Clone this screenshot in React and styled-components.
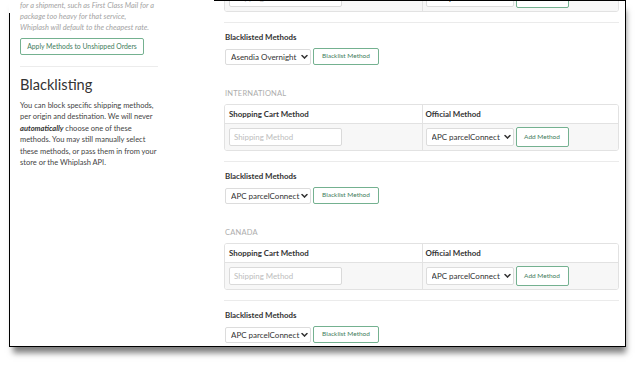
import React from 'react';
import styled, { createGlobalStyle } from 'styled-components';

const Global = createGlobalStyle`
  html, body { margin: 0; padding: 0; background: #fff; }
  body {
    width: 635px; height: 366px; overflow: hidden;
    font-family: Lato, "Open Sans", "Liberation Sans", sans-serif;
    color: #333;
  }
  * { box-sizing: border-box; }
`;

const Frame = styled.div`
  position: relative;
  margin-left: 9px;
  width: 617px;
  height: 347px;
  border-right: 1px solid #000;
  border-bottom: 1px solid #000;
  background: #fff;
  box-shadow: 2px 8px 6px -2px rgba(0, 0, 0, 0.5);
  display: flex;
  overflow: hidden;
  &::before {
    content: '';
    position: absolute;
    top: 0; left: 205px; right: 0; height: 1px;
    background: #000; z-index: 3;
  }
  &::after {
    content: '';
    position: absolute;
    top: 13px; left: 0; bottom: 0; width: 1px;
    background: #000; z-index: 3;
  }
`;

const Sidebar = styled.aside`
  flex: none;
  width: 149px;
  padding-left: 11px;
  display: flex;
  flex-direction: column;
  align-items: flex-start;
`;

const Note = styled.p`
  margin: 0;
  font-size: 7.4px;
  line-height: 11px;
  font-style: italic;
  color: #a3a3a3;
`;

const OutlineButton = styled.button`
  flex: none;
  width: ${p => (p.$w ? `${p.$w}px` : 'auto')};
  height: ${p => p.$h || 17}px;
  padding: 0;
  border: 1px solid #74b190;
  border-radius: 2px;
  background: #fff;
  color: #3f7d5d;
  font-family: Lato, "Open Sans", sans-serif;
  font-size: ${p => p.$fs || 6.5}px;
  line-height: 1;
  margin: 0;
  cursor: pointer;
  white-space: nowrap;
`;

const ApplyButton = styled(OutlineButton)`
  margin-top: 5px;
`;

const SideRule = styled.hr`
  margin: 11px 0 0;
  width: 138px;
  border: 0;
  border-top: 1px solid #ececec;
`;

const Heading = styled.h2`
  margin: 9px 0 0;
  font-size: 14.6px;
  line-height: 18px;
  font-weight: 400;
  color: #333;
`;

const Body = styled.p`
  margin: 6px 0 0;
  width: 140px;
  font-size: 7.5px;
  line-height: 11.4px;
  color: #444;
  b { font-style: italic; font-weight: 700; color: #333; }
`;

const Main = styled.main`
  flex: none;
  width: 395px;
  margin-left: 66px;
  margin-top: -50px;
  display: flex;
  flex-direction: column;
`;

const Section = styled.section`
  display: flex;
  flex-direction: column;
  padding-bottom: 24px;
`;

const RegionLabel = styled.div`
  height: 10px;
  padding-left: 1px;
  line-height: 10px;
  font-size: 7.5px;
  letter-spacing: 0.2px;
  color: #adadad;
  text-transform: uppercase;
`;

const Table = styled.div`
  margin-top: 5px;
  border: 1px solid #e2e2e2;
  border-radius: 3px;
  overflow: hidden;
  display: grid;
  grid-template-columns: 1fr 1fr;
`;

const HeadCell = styled.div`
  height: 19px;
  line-height: 18px;
  padding-left: ${p => p.$pl}px;
  font-size: 7.9px;
  font-weight: 700;
  color: #333;
  background: #fff;
  border-bottom: 1px solid #e2e2e2;
  border-left: ${p => (p.$divider ? '1px solid #e2e2e2' : '0')};
`;

const BodyCell = styled.div`
  height: 26px;
  padding-left: ${p => p.$pl}px;
  background: #f7f7f7;
  display: flex;
  align-items: center;
  gap: 2px;
  border-left: ${p => (p.$divider ? '1px solid #e2e2e2' : '0')};
`;

const TextInput = styled.input`
  width: 113px;
  height: 18px;
  margin: 0;
  padding: 0 4px;
  border: 1px solid #dadada;
  border-radius: 2px;
  background: #fff;
  font-family: Lato, "Open Sans", sans-serif;
  font-size: 7.9px;
  color: #333;
  &::placeholder { color: #bdbdbd; }
`;

const SelectWrap = styled.span`
  position: relative;
  flex: none;
  display: inline-flex;
  width: ${p => p.$w}px;
  height: ${p => p.$h}px;
`;

const Select = styled.select`
  appearance: none;
  -webkit-appearance: none;
  width: 100%;
  height: 100%;
  margin: 0;
  padding: 0 9px 0 5px;
  border: 1px solid #dcdcdc;
  border-radius: 2px;
  background: #fff;
  font-family: Lato, "Open Sans", sans-serif;
  font-size: 8px;
  color: #333;
`;

const Chevron = styled.svg`
  position: absolute;
  right: 3px;
  top: 50%;
  transform: translateY(-50%);
  pointer-events: none;
`;

const Rule = styled.hr`
  margin: 10px 0 0;
  border: 0;
  border-top: 1px solid #ebebeb;
`;

const SubLabel = styled.div`
  margin-top: 9px;
  padding-left: 1px;
  height: 10px;
  line-height: 10px;
  font-size: 7.9px;
  font-weight: 700;
  color: #333;
`;

const Row = styled.div`
  margin-top: 6px;
  padding-left: 1px;
  height: 17px;
  display: flex;
  align-items: center;
  gap: 2px;
`;

function MethodSelect({ value, w, h }) {
  return (
    <SelectWrap $w={w} $h={h}>
      <Select defaultValue={value}>
        <option>{value}</option>
      </Select>
      <Chevron width="7" height="5" viewBox="0 0 7 5">
        <path d="M1 1 L3.5 3.6 L6 1" fill="none" stroke="#333" strokeWidth="1.5" strokeLinecap="round" strokeLinejoin="round" />
      </Chevron>
    </SelectWrap>
  );
}

function Region({ name, official, blacklisted }) {
  return (
    <Section>
      <RegionLabel>{name}</RegionLabel>
      <Table>
        <HeadCell $pl={4}>Shopping Cart Method</HeadCell>
        <HeadCell $divider $pl={3}>Official Method</HeadCell>
        <BodyCell $pl={4}>
          <TextInput placeholder="Shipping Method" />
        </BodyCell>
        <BodyCell $divider $pl={3}>
          <MethodSelect value={official} w={88} h={18} />
          <OutlineButton $h={20} $w={53}>Add Method</OutlineButton>
        </BodyCell>
      </Table>
      <Rule />
      <SubLabel>Blacklisted Methods</SubLabel>
      <Row>
        <MethodSelect value={blacklisted} w={86} h={16} />
        <OutlineButton $h={17} $w={66}>Blacklist Method</OutlineButton>
      </Row>
    </Section>
  );
}

export default function App() {
  return (
    <>
      <Global />
      <Frame>
        <Sidebar>
          <Note>
            for a shipment, such as First Class Mail for a<br />
            package too heavy for that service,<br />
            Whiplash will default to the cheapest rate.
          </Note>
          <ApplyButton $fs={6.8} $w={124}>Apply Methods to Unshipped Orders</ApplyButton>
          <SideRule />
          <Heading>Blacklisting</Heading>
          <Body>
            You can block specific shipping methods, per origin and destination. We will never{' '}
            <b>automatically</b> choose one of these methods. You may still manually select
            these methods, or pass them in from your store or the Whiplash API.
          </Body>
        </Sidebar>
        <Main>
          <Region name="Domestic" official="APC parcelConnect" blacklisted="Asendia Overnight" />
          <Region name="International" official="APC parcelConnect" blacklisted="APC parcelConnect" />
          <Region name="Canada" official="APC parcelConnect" blacklisted="APC parcelConnect" />
        </Main>
      </Frame>
    </>
  );
}
